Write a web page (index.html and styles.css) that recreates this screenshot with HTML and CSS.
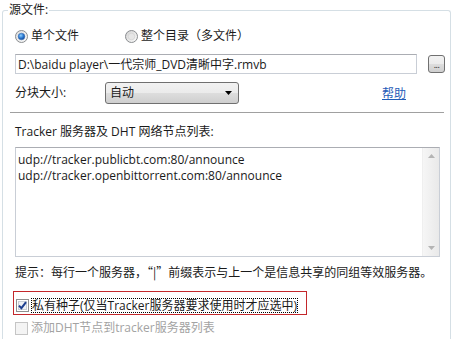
FILE: index.html
```html
<!DOCTYPE html>
<html lang="zh-CN">
<head>
<meta charset="utf-8">
<link rel="stylesheet" href="styles.css">
</head>
<body>
<fieldset class="group">
  <legend class="legend">源文件:</legend>
  <div class="content">
    <div class="radio-row">
      <label class="radio-item first">
        <svg class="radio" width="13" height="13" viewBox="0 0 13 13">
          <defs>
            <linearGradient id="rg1" x1="0" y1="0" x2="1" y2="1">
              <stop offset="0" stop-color="#dcdcdc"/><stop offset="1" stop-color="#fbfbfb"/>
            </linearGradient>
            <radialGradient id="dot" cx="0.4" cy="0.35" r="0.7">
              <stop offset="0" stop-color="#8fd0ff"/><stop offset="0.55" stop-color="#2a78d0"/><stop offset="1" stop-color="#0d3f8c"/>
            </radialGradient>
          </defs>
          <circle cx="6.5" cy="6.5" r="6" fill="url(#rg1)" stroke="#8a8d90" stroke-width="1"/>
          <circle cx="6.5" cy="6.5" r="3.3" fill="url(#dot)" stroke="#3b6fb4" stroke-width="0.6"/>
        </svg>
        <span>单个文件</span>
      </label>
      <label class="radio-item">
        <svg class="radio" width="13" height="13" viewBox="0 0 13 13">
          <defs>
            <linearGradient id="rg2" x1="0" y1="0" x2="1" y2="1">
              <stop offset="0" stop-color="#d0d0d0"/><stop offset="1" stop-color="#fdfdfd"/>
            </linearGradient>
          </defs>
          <circle cx="6.5" cy="6.5" r="6" fill="url(#rg2)" stroke="#8a8d90" stroke-width="1"/>
          <circle cx="6.5" cy="6.5" r="3.3" fill="#e6e6e6" stroke="#cfcfcf" stroke-width="0.6"/>
        </svg>
        <span>整个目录（多文件）</span>
      </label>
    </div>

    <div class="file-row">
      <div class="textbox">D:\baidu player\一代宗师_DVD清晰中字.rmvb</div>
      <div class="browse">...</div>
    </div>

    <div class="size-row">
      <span class="size-label">分块大小:</span>
      <div class="combo">
        <span>自动</span>
        <svg class="combo-arrow" width="7" height="4" viewBox="0 0 7 4"><path d="M0 0H7L3.5 4Z" fill="#000"/></svg>
      </div>
      <a class="help" href="#">帮助</a>
    </div>

    <div class="separator"></div>

    <div class="tracker-label">Tracker 服务器及 DHT 网络节点列表:</div>

    <div class="listbox">
      <div class="list-text">
        <div>udp://tracker.publicbt.com:80/announce</div>
        <div>udp://tracker.openbittorrent.com:80/announce</div>
      </div>
      <div class="scrollbar">
        <svg width="7" height="4" viewBox="0 0 7 4"><path d="M0 4H7L3.5 0Z" fill="#b4b4b4"/></svg>
        <svg width="7" height="4" viewBox="0 0 7 4"><path d="M0 0H7L3.5 4Z" fill="#b4b4b4"/></svg>
      </div>
    </div>

    <div class="hint">提示：每行一个服务器，<span class="cjk">“|”</span>前缀表示与上一个是信息共享的同组等效服务器。</div>

    <div class="private-box">
      <span class="check checked">
        <svg width="13" height="13" viewBox="0 0 13 13">
          <rect x="0.5" y="0.5" width="12" height="12" fill="#fff" stroke="#8e8f8f"/>
          <rect x="2.5" y="2.5" width="8" height="8" fill="#eef1f5" stroke="#c8ced6"/>
          <path d="M3 6.6 L5.4 9.2 L10 3.2" fill="none" stroke="#1c3e8e" stroke-width="2"/>
        </svg>
      </span>
      <span class="focus-text">私有种子(仅当Tracker服务器要求使用时才应选中)</span>
    </div>

    <div class="dht-row">
      <span class="check">
        <svg width="13" height="13" viewBox="0 0 13 13">
          <rect x="0.5" y="0.5" width="12" height="12" fill="#f4f4f4" stroke="#c5c5c5"/>
        </svg>
      </span>
      <span class="disabled-text">添加DHT节点到tracker服务器列表</span>
    </div>
  </div>
</fieldset>
</body>
</html>
```

FILE: styles.css
```css
html, body {
  margin: 0;
  padding: 0;
  background: #fff;
}
body {
  width: 455px;
  height: 339px;
  overflow: hidden;
  font-family: "Open Sans", "Noto Sans CJK SC", sans-serif;
  font-size: 12px;
  line-height: 16px;
  color: #1a1a1a;
}
.cjk {
  font-family: "Noto Sans CJK SC", sans-serif;
}
.group {
  margin: 2px 4px 0 2px;
  padding: 0 5px;
  border: 1px solid #d5dfe5;
  border-bottom: 0;
  border-radius: 3px 3px 0 0;
  height: 337px;
  box-sizing: border-box;
  min-width: 0;
}
.legend {
  padding: 0 1px;
  line-height: 16px;
}
.content {
  padding-left: 7px;
}
.radio-row {
  display: flex;
  align-items: center;
  height: 20px;
  margin-top: 8px;
}
.radio-item {
  display: flex;
  align-items: center;
  gap: 3px;
}
.radio-item.first {
  width: 110px;
}
.radio {
  flex: none;
}
.file-row {
  display: flex;
  align-items: center;
  margin-top: 8px;
}
.textbox {
  width: 402px;
  height: 20px;
  box-sizing: border-box;
  border: 1px solid #c9ced6;
  border-top-color: #abadb3;
  padding: 1px 0 0 2px;
  line-height: 17px;
  white-space: nowrap;
}
.browse {
  width: 17px;
  height: 18px;
  box-sizing: border-box;
  margin-left: 11px;
  border: 1px solid #707070;
  border-radius: 3px;
  background: linear-gradient(#f2f2f2 0%, #ebebeb 50%, #dddddd 51%, #cfcfcf 100%);
  font-size: 9px;
  line-height: 16px;
  text-align: center;
  letter-spacing: -0.5px;
  padding-top: 1px;
}
.size-row {
  display: flex;
  align-items: center;
  margin-top: 8px;
  height: 22px;
}
.size-label {
  width: 90px;
}
.combo {
  width: 134px;
  height: 22px;
  box-sizing: border-box;
  border: 1px solid #707070;
  border-radius: 3px;
  background: linear-gradient(#f2f2f2 0%, #ebebeb 50%, #dddddd 51%, #cfcfcf 100%);
  display: flex;
  align-items: center;
  justify-content: space-between;
  padding: 0 6px 0 4px;
}
.combo-arrow {
  flex: none;
}
.help {
  margin-left: 143px;
  color: #1f5cb8;
  text-decoration: underline;
  margin-top: 1px;
}
.separator {
  height: 1px;
  background: #a0a0a0;
  margin: 8px 0 0 -5px;
  width: 434px;
}
.tracker-label {
  margin-top: 11px;
}
.listbox {
  display: flex;
  margin-top: 7px;
  width: 425px;
  height: 110px;
  box-sizing: border-box;
  border: 1px solid #c9ced6;
  border-top-color: #abadb3;
}
.list-text {
  flex: 1;
  padding: 4px 0 0 2px;
  line-height: 16px;
}
.scrollbar {
  width: 17px;
  background: linear-gradient(90deg, #f6f6f6, #e9e9e9);
  border-left: 1px solid #efefef;
  display: flex;
  flex-direction: column;
  justify-content: space-between;
  align-items: center;
  padding: 6px 0 6px;
  box-sizing: border-box;
}
.hint {
  margin-top: 7px;
  white-space: nowrap;
}
.private-box {
  display: flex;
  align-items: center;
  margin: 10px 0 0 -2px;
  width: 294px;
  height: 24px;
  box-sizing: border-box;
  border: 1px solid #c3272b;
  padding: 5px 0 0 2px;
}
.check {
  display: flex;
  flex: none;
  width: 13px;
  height: 13px;
}
.focus-text {
  margin-left: 2px;
  padding: 0 1px;
  outline: 1px dotted #000;
  outline-offset: -1px;
  line-height: 15px;
  white-space: nowrap;
}
.dht-row {
  display: flex;
  align-items: center;
  margin-top: 5px;
  height: 16px;
}
.disabled-text {
  margin-left: 3px;
  color: #a3a3a3;
  white-space: nowrap;
}
```
